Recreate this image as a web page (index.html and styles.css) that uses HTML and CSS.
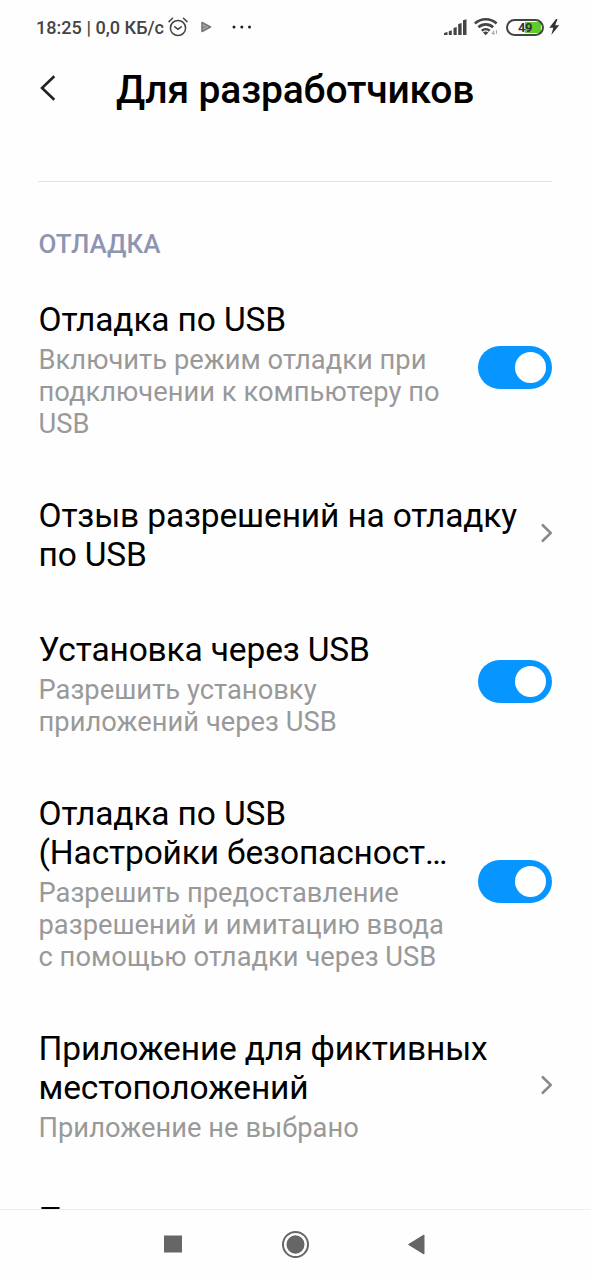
FILE: index.html
```html
<!DOCTYPE html>
<html lang="ru">
<head>
<meta charset="utf-8">
<title>Для разработчиков</title>
<link rel="stylesheet" href="styles.css">
</head>
<body>
<div class="screen">
  <div class="status">
    <span class="clock">18:25 | 0,0 КБ/с</span>
    <svg class="alarm" width="20" height="20" viewBox="0 0 20 20" fill="none" stroke="#444" stroke-width="1.5" stroke-linecap="round"><circle cx="10" cy="11" r="7.6"/><path d="M6.800 9.800l3.200 2.500 3.200-2.500M1 4.600L4.500 1.300M19 4.600L15.500 1.300"/></svg>
    <svg class="play" width="11" height="12" viewBox="0 0 11 12"><path d="M1 1.500L9.500 6 1 10.500z" fill="#aaa" stroke="#777" stroke-width="1.600" stroke-linejoin="round"/><path d="M1 7l4-1.500" stroke="#777" stroke-width="1.300"/></svg>
    <svg class="dots" width="20" height="4" viewBox="0 0 20 4" fill="#222"><circle cx="2" cy="2" r="1.500"/><circle cx="9.800" cy="2" r="1.500"/><circle cx="17.500" cy="2" r="1.500"/></svg>
    <svg class="signal" width="24" height="17" viewBox="0 0 24 17" fill="#444"><path d="M0 16v-2l3.500-1v3zM4.800 12.300l3-1V16h-3zM9.500 9l3.200-1v8H9.500zM14.200 5l3.400-1v12h-3.400zM19 1.300l3.500-1.100V16H19z"/></svg>
    <svg class="wifi" width="24" height="18" viewBox="0 0 24 18" fill="none" stroke="#444" stroke-width="2.600"><path d="M.9 5.500C7-.1 16.500-.1 22.600 5.500M4.400 9.300c4.200-3.900 10.500-3.900 14.700 0M7.800 12.700c2.300-2 5.600-2 7.900 0"/><path d="M9 14.500q2.700-2 5.400 0L11.700 17.200z" fill="#444" stroke="none"/><path d="M20 12.500l-2 3h2.500M19.800 13v4M22.500 12v4" stroke="#999" stroke-width=".8"/></svg>
    <div class="battery"><span>49</span></div>
    <svg class="bolt" width="11" height="16" viewBox="0 0 11 16" fill="#333"><path d="M7 0L.3 8.800h4L2.300 16 10.200 6.200H6.200L8.500 0z"/></svg>
  </div>
  <header class="header">
    <svg width="18" height="28" viewBox="0 0 18 28" fill="none" stroke="#222" stroke-width="2.600"><path d="M15.300 2.200L3 14l12.300 11.800"/></svg>
    <h1>Для разработчиков</h1>
  </header>
  <main class="content">
    <h2 class="section">ОТЛАДКА</h2>
    <div class="item">
      <div class="text"><div class="title">Отладка по USB</div><div class="sub">Включить режим отладки при<br>подключении к компьютеру по<br>USB</div></div>
      <div class="toggle"></div>
    </div>
    <div class="item">
      <div class="text"><div class="title">Отзыв разрешений на отладку<br>по USB</div></div>
      <svg class="chevron" width="13" height="20" viewBox="0 0 13 20"><path d="M2 1.500L10.800 10 2 18.500"/></svg>
    </div>
    <div class="item">
      <div class="text"><div class="title">Установка через USB</div><div class="sub">Разрешить установку<br>приложений через USB</div></div>
      <div class="toggle"></div>
    </div>
    <div class="item">
      <div class="text"><div class="title">Отладка по USB<br>(Настройки безопасност…</div><div class="sub">Разрешить предоставление<br>разрешений и имитацию ввода<br>с помощью отладки через USB</div></div>
      <div class="toggle"></div>
    </div>
    <div class="item">
      <div class="text"><div class="title">Приложение для фиктивных<br>местоположений</div><div class="sub">Приложение не выбрано</div></div>
      <svg class="chevron" width="13" height="20" viewBox="0 0 13 20"><path d="M2 1.500L10.800 10 2 18.500"/></svg>
    </div>
    <div class="item">
      <div class="text"><div class="title">П</div></div>
    </div>
  </main>
  <nav class="nav">
    <svg width="18" height="30" viewBox="0 0 18 30" fill="#666"><path d="M0 5.500h18v17H0z"/></svg>
    <svg width="28" height="30" viewBox="0 0 28 30"><ellipse cx="14.500" cy="14.500" rx="12.500" ry="12.500" fill="none" stroke="#666" stroke-width="2"/><ellipse cx="14.500" cy="14.500" rx="9" ry="9.200" fill="#666"/></svg>
    <svg width="18" height="30" viewBox="0 0 18 30" fill="#666" stroke="#666" stroke-width="1" stroke-linejoin="round"><path d="M.5 14.500L16 5v19z"/></svg>
  </nav>
</div>
</body>
</html>
```
FILE: styles.css
```css
* { box-sizing: border-box; }
body { margin: 0; background: #fefefe; font-family: Roboto, sans-serif; }
svg { display: block; flex: none; }
.screen { width: 591px; height: 1280px; overflow: hidden; display: flex; flex-direction: column; }
.status { height: 56px; padding: 0 31px 2px 36px; display: flex; align-items: center; flex: none; color: #444; }
.clock { font-size: 18.1px; font-weight: 500; width: 128px; margin-right: 4px; white-space: nowrap; }
.play { margin-left: 13px; }
.dots { margin-left: 20px; }
.signal { margin-left: auto; }
.wifi { margin-left: 6px; }
.battery { width: 38px; height: 17px; margin: 0 5px 0 8px; border: 2px solid #444; border-radius: 9px; background: linear-gradient(90deg, transparent 49%, #5fcb2c 49%) 1px 1px / 32px 11px no-repeat; display: flex; justify-content: center; align-items: center; font-size: 13px; font-weight: 700; color: #333; letter-spacing: -0.5px; }
.header { height: 125px; flex: none; padding: 18px 0 0 39px; display: flex; align-items: flex-start; }
.header h1 { margin: -4.5px 0 0 59px; font-size: 39px; line-height: 40px; font-weight: 500; letter-spacing: -0.15px; color: #000; white-space: nowrap; }
.content { height: 1028px; flex: none; overflow: hidden; margin: 0 39px 0 38px; border-top: 1px solid #e4e4e4; }
.section { margin: 46px 0 40px; font-size: 26px; line-height: 32px; font-weight: 500; color: #8e95b3; text-indent: 0.5px; }
.item { display: flex; align-items: center; justify-content: space-between; margin-bottom: 55.7px; white-space: nowrap; }
.text { padding-left: 0.5px; }
.title { font-size: 33.5px; line-height: 39.2px; letter-spacing: -0.15px; color: #000; }
.sub { margin-top: 5px; font-size: 27.3px; line-height: 32px; letter-spacing: 0.03px; color: #999; }
.toggle { width: 74px; height: 43px; border-radius: 22px; background: #0795ff; padding: 6px; display: flex; justify-content: flex-end; margin-bottom: 5px; flex: none; }
.toggle::after { content: ""; width: 31px; height: 31px; border-radius: 50%; background: #fff; }
.chevron { fill: none; stroke: #888; stroke-width: 2.5; margin: 0 -1px 4px 0; }
.nav { height: 71px; border-top: 1px solid #eee; display: flex; align-items: center; padding-left: 164px; gap: 99px; }
```
